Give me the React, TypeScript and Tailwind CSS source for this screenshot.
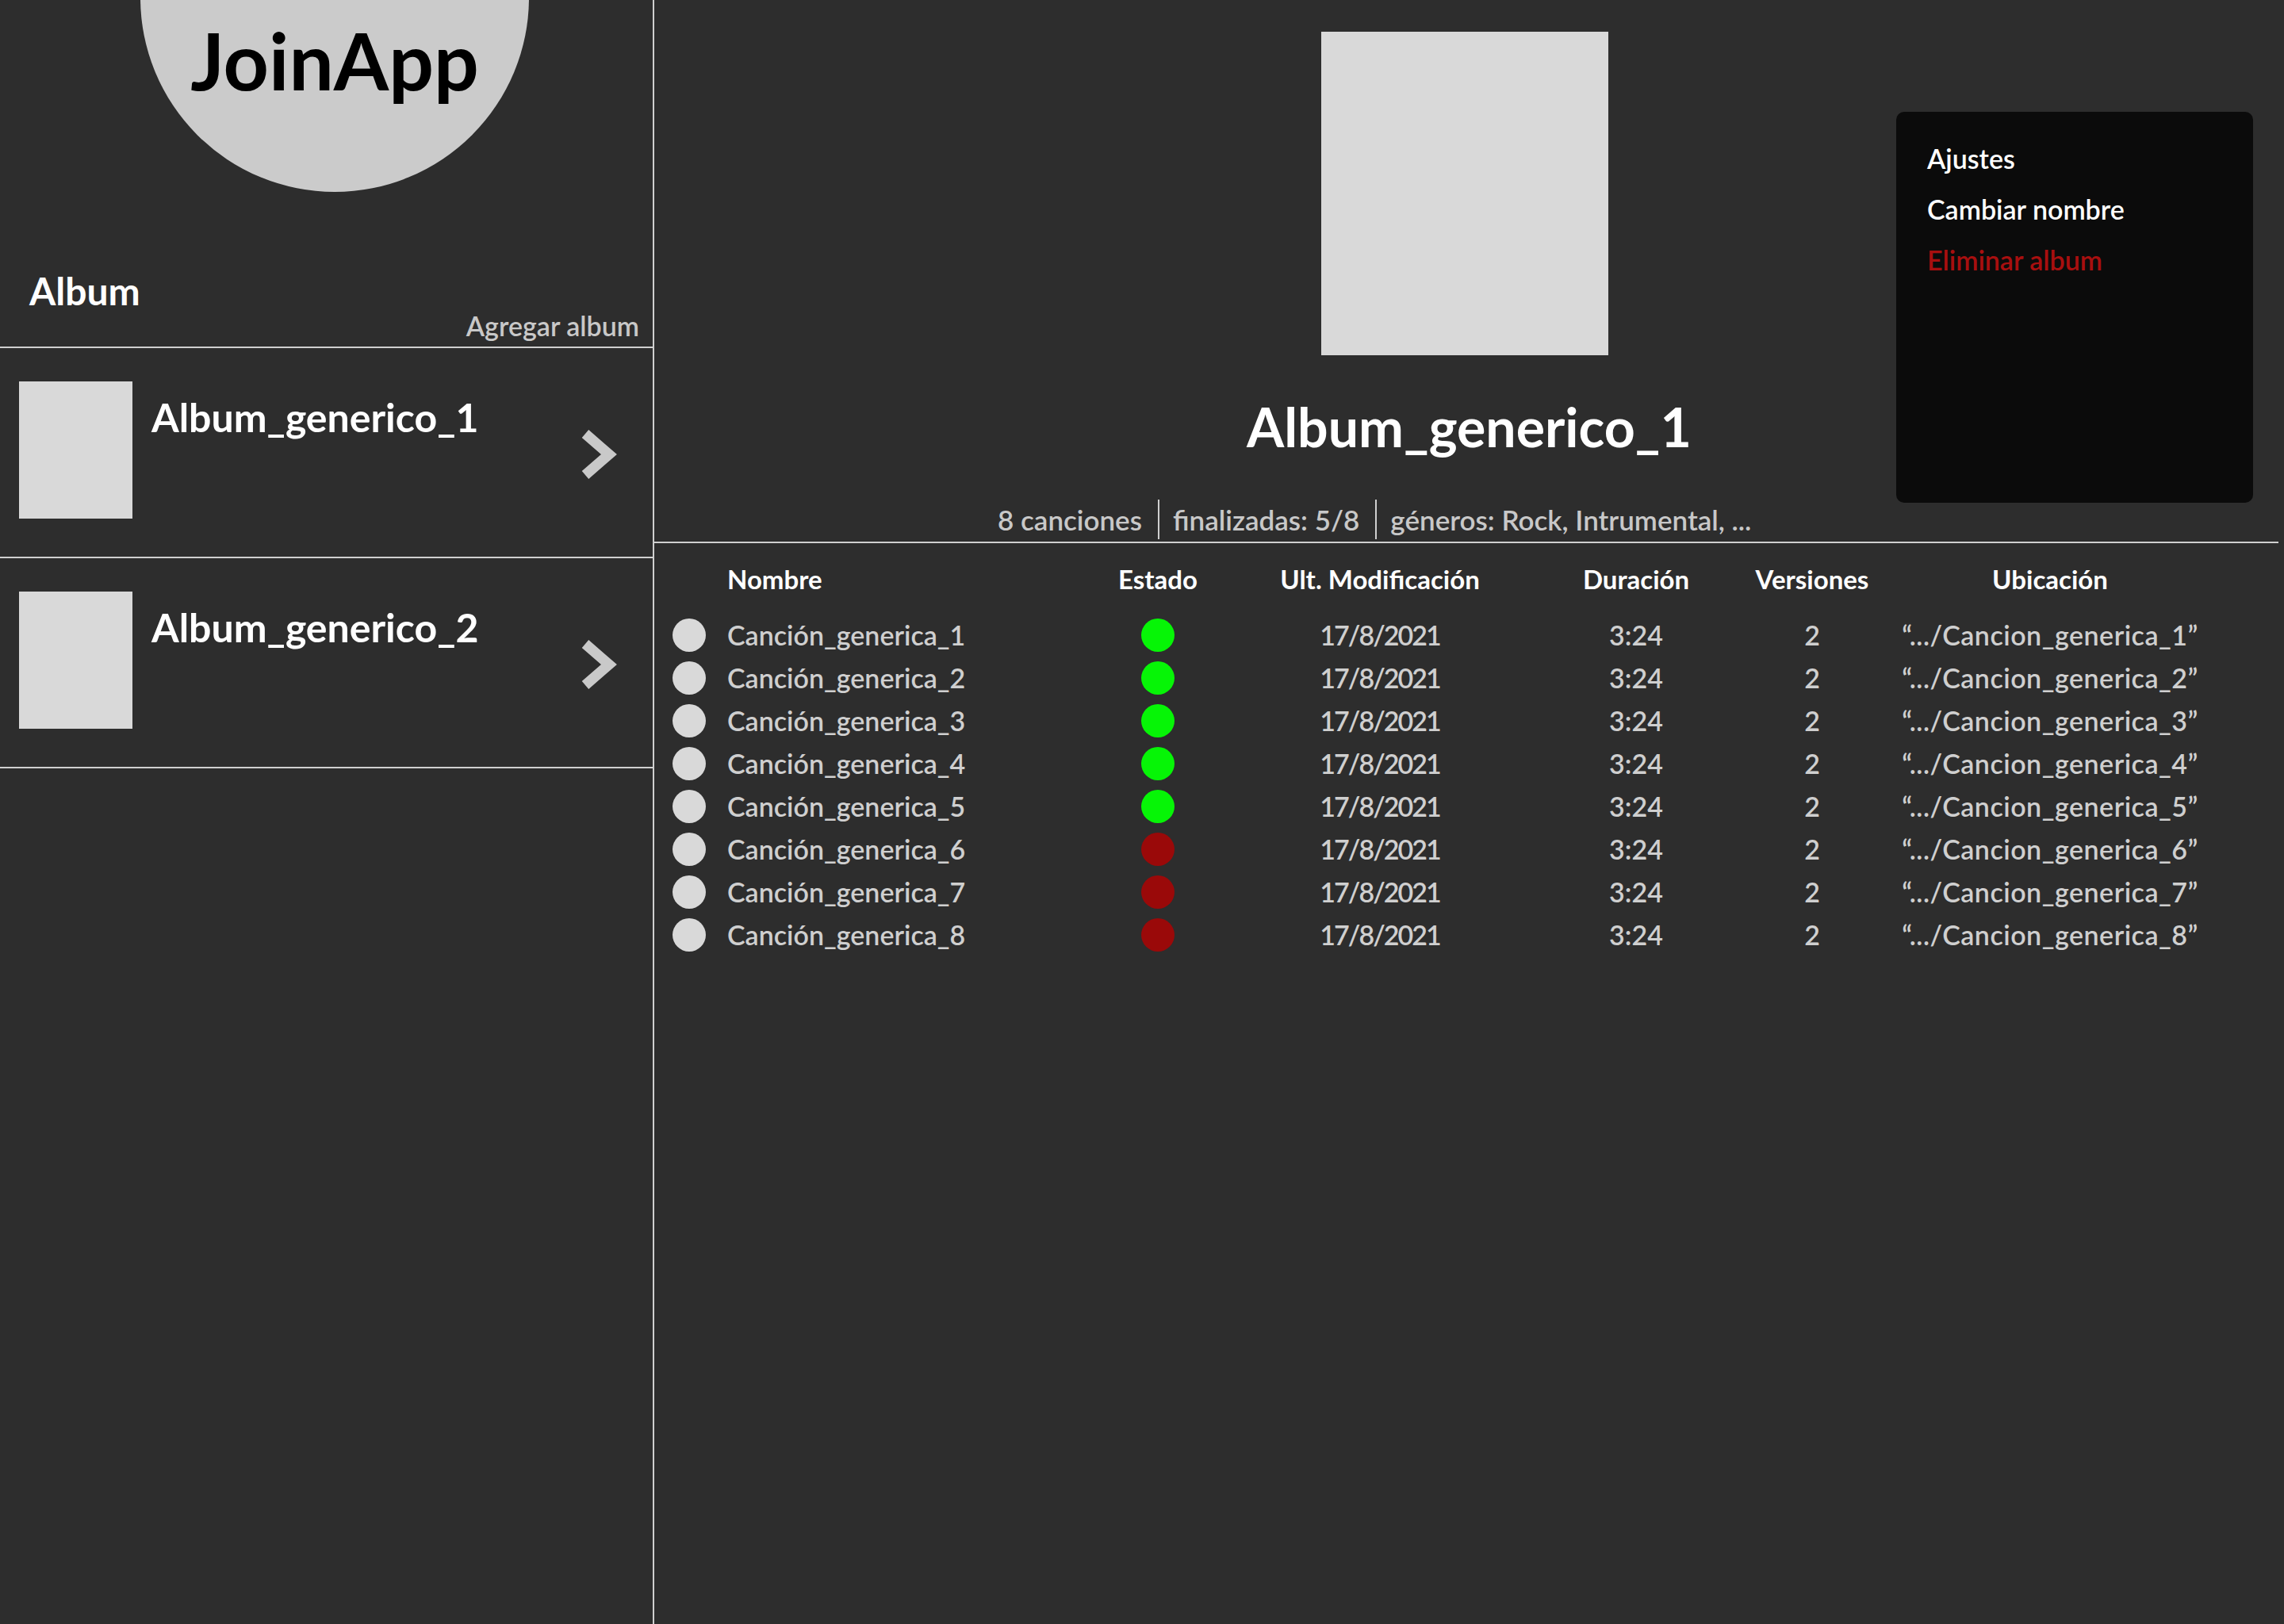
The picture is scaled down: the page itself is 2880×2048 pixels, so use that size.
import React from 'react';

const songs = Array.from({ length: 8 }, (_, i) => ({ n: i + 1, done: i < 5 }));

const Chevron = () => (
  <svg width="48" height="62" viewBox="0 0 48 62">
    <polyline points="7,5 37,31 7,57" fill="none" stroke="#c9c9c9" strokeWidth="13" />
  </svg>
);

const AlbumItem = ({ name }: { name: string }) => (
  <div className="flex h-[265px] items-start border-b-2 border-[#cfcfcf] pl-[24px] pr-[44px] pt-[42px]">
    <div className="h-[173px] w-[143px] shrink-0 bg-[#d9d9d9]" />
    <div className="ml-[24px] mt-[20px] flex-1 text-[50px] font-bold leading-none text-white">{name}</div>
    <div className="mt-[61px] shrink-0">
      <Chevron />
    </div>
  </div>
);

const Sidebar = () => (
  <aside className="w-[825px] shrink-0 border-r-2 border-[#cfcfcf]">
    <div className="flex h-[242px] items-end justify-center overflow-hidden pl-[21px]">
      <div className="flex h-[490px] w-[490px] shrink-0 flex-col items-center justify-end rounded-full bg-[#cbcbcb] pb-[117px]">
        <span className="text-[100px] font-bold leading-none text-black">JoinApp</span>
      </div>
    </div>
    <div className="border-b-2 border-[#cfcfcf]">
      <h2 className="mt-[101px] pl-[37px] text-[48px] font-bold leading-none text-white">Album</h2>
      <div className="mb-[9px] mt-[3px] pr-[17px] text-right text-[34px] font-semibold leading-none text-[#c8c8c8]">
        Agregar album
      </div>
    </div>
    <AlbumItem name="Album_generico_1" />
    <AlbumItem name="Album_generico_2" />
  </aside>
);

const Sep = () => <div className="ml-[20px] mr-[17px] h-[50px] w-[2px] bg-[#cfcfcf]" />;

const Main = () => (
  <main className="relative flex-1">
    <div className="flex flex-col items-center pt-[40px]">
      <div className="mr-[11px] h-[408px] w-[362px] bg-[#d9d9d9]" />
      <h1 className="mt-[56px] text-[68px] font-bold leading-none text-white">Album_generico_1</h1>
    </div>
    <div className="mt-[58px] flex items-center pl-[433px] text-[35px] font-semibold leading-none text-[#c8c8c8]">
      <span>8 canciones</span>
      <Sep />
      <span>finalizadas: 5/8</span>
      <Sep />
      <span>géneros: Rock, Intrumental, ...</span>
    </div>
    <div className="mr-[7px] mt-[3px] h-[2px] bg-[#cfcfcf]" />

    <div className="mt-[29px] flex h-[32px] items-center text-[33px] font-bold leading-none text-white">
      <div className="w-[92px]" />
      <div className="w-[463px]">Nombre</div>
      <div className="w-[160px] text-center">Estado</div>
      <div className="w-[400px] text-center">Ult. Modificación</div>
      <div className="w-[246px] text-center">Duración</div>
      <div className="w-[198px] text-center">Versiones</div>
      <div className="w-[402px] text-center">Ubicación</div>
    </div>

    <div className="mt-[28px]">
      {songs.map((s) => (
        <div key={s.n} className="flex h-[54px] items-center text-[34px] font-semibold leading-none text-[#cfcfcf]">
          <div className="w-[92px] pl-[23px]">
            <div className="h-[42px] w-[42px] rounded-full bg-[#d9d9d9]" />
          </div>
          <div className="w-[463px]">Canción_generica_{s.n}</div>
          <div className="flex w-[160px] justify-center">
            <div className={`h-[42px] w-[42px] rounded-full ${s.done ? 'bg-[#06f506]' : 'bg-[#9a0909]'}`} />
          </div>
          <div className="w-[400px] text-center tracking-[-2px]">17/8/2021</div>
          <div className="w-[246px] text-center">3:24</div>
          <div className="w-[198px] text-center">2</div>
          <div className="w-[402px] text-center tracking-[0.5px]">“.../Cancion_generica_{s.n}”</div>
        </div>
      ))}
    </div>

    <div className="absolute right-[39px] top-[141px] flex h-[493px] w-[450px] flex-col gap-[30px] rounded-[10px] bg-[#0b0b0b] pl-[39px] pt-[42px] text-[34px] font-semibold leading-none">
      <span className="text-white">Ajustes</span>
      <span className="text-white">Cambiar nombre</span>
      <span className="text-[#a80f0f]">Eliminar album</span>
    </div>
  </main>
);

export default function App() {
  return (
    <div className="flex min-h-screen bg-[#2d2d2d] font-[Lato,sans-serif]">
      <Sidebar />
      <Main />
    </div>
  );
}
